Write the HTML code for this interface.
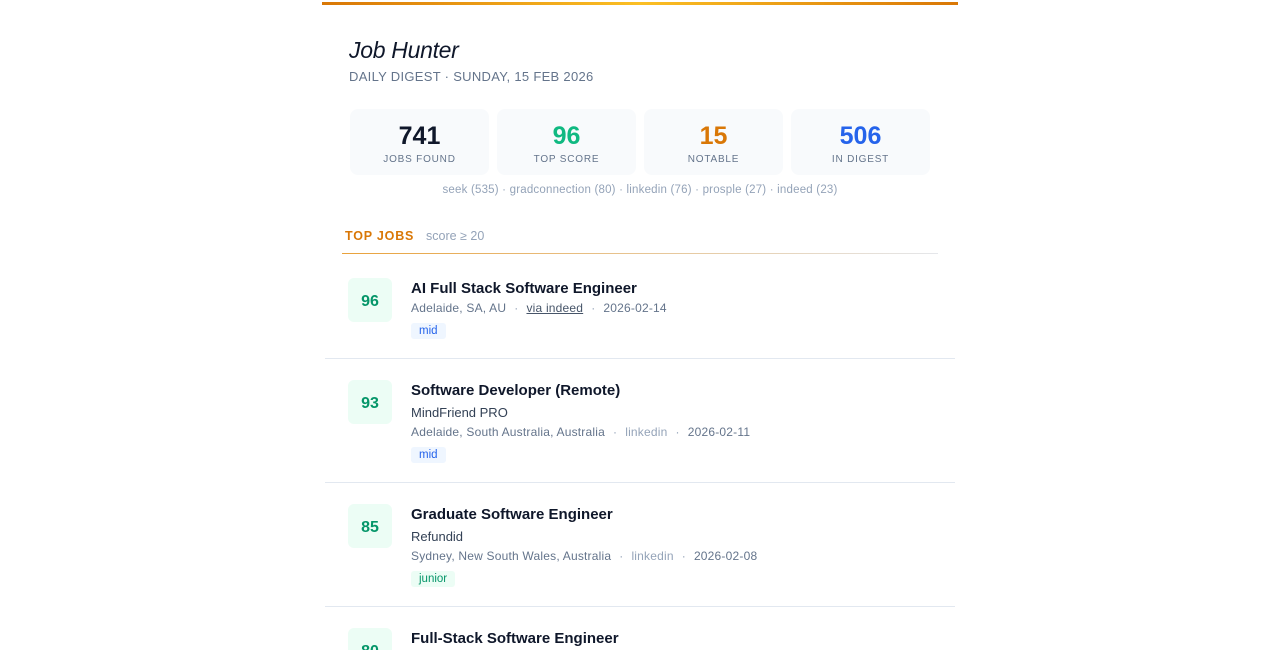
<!DOCTYPE html>
<html><head><meta charset="utf-8"><style>
*{box-sizing:border-box;margin:0;padding:0}
html,body{width:1280px;height:650px;overflow:hidden}
body{background:#fff;font-family:"Liberation Sans",sans-serif;color:#0f172a;position:relative}
.wrap{position:absolute;left:322px;top:0;width:636px}
.bar{position:absolute;left:0;top:2px;width:636px;height:3px;background:linear-gradient(90deg,#d97706,#fbbf24 50%,#d97706)}
.t{position:absolute;left:27px;top:37px;font-size:23px;font-style:italic;color:#0f172a;letter-spacing:-0.3px}
.sub{position:absolute;left:27px;top:69px;font-size:13px;color:#64748b;letter-spacing:0.3px}
.stat{position:absolute;top:109px;width:139px;height:66px;background:#f8fafc;border-radius:8px;text-align:center}
.stat b{display:block;font-size:25px;margin-top:13px;line-height:28px}
.stat span{display:block;font-size:10px;color:#64748b;letter-spacing:0.8px;margin-top:4px}
.src{position:absolute;left:0;width:636px;top:184px;text-align:center;font-size:11.5px;color:#94a3b8;letter-spacing:0.2px}
.sec{position:absolute;left:23px;top:229px;font-size:12.5px;font-weight:bold;color:#d97706;letter-spacing:0.8px}
.sec2{position:absolute;left:104px;top:229px;font-size:12.5px;color:#94a3b8}
.line{position:absolute;left:20px;top:253px;width:596px;height:1px;background:linear-gradient(90deg,#e9a23b,#e5e7eb)}
.job{position:absolute;left:3px;width:630px;border-bottom:1px solid #e2e8f0}
.sc{position:absolute;left:23px;width:44px;height:44px;background:#ecfdf5;border-radius:6px;color:#059669;font-weight:bold;font-size:16px;text-align:center;line-height:47px}
.jt{position:absolute;left:86px;font-size:15px;font-weight:bold;color:#0f172a}
.co{position:absolute;left:86px;font-size:13px;color:#334155}
.meta{position:absolute;left:86px;font-size:12px;color:#64748b;white-space:nowrap;letter-spacing:0.2px}
.meta i{font-style:normal;color:#94a3b8;margin:0 8px}
.tag{position:absolute;left:86px;font-size:11.5px;padding:2px 8px;border-radius:3px}
.mid{background:#eff6ff;color:#2563eb}
.jun{background:#ecfdf5;color:#059669}
</style></head><body><div class="wrap">
<div class="bar"></div>
<div class="t">Job Hunter</div>
<div class="sub">DAILY DIGEST · SUNDAY, 15 FEB 2026</div>
<div class="stat" style="left:28px"><b style="color:#0f172a">741</b><span>JOBS FOUND</span></div>
<div class="stat" style="left:175px"><b style="color:#10b981">96</b><span>TOP SCORE</span></div>
<div class="stat" style="left:322px"><b style="color:#d97706">15</b><span>NOTABLE</span></div>
<div class="stat" style="left:469px"><b style="color:#2563eb">506</b><span>IN DIGEST</span></div>
<div class="src">seek (535) · gradconnection (80) · linkedin (76) · prosple (27) · indeed (23)</div>
<div class="sec">TOP JOBS</div><div class="sec2">score ≥ 20</div>
<div class="line"></div>

<div class="job" style="top:254px;height:105px">
<div class="sc" style="top:24px">96</div>
<div class="jt" style="top:26px">AI Full Stack Software Engineer</div>
<div class="meta" style="top:47px">Adelaide, SA, AU<i>·</i><u style="color:#475569">via indeed</u><i>·</i>2026-02-14</div>
<div class="tag mid" style="top:69px">mid</div>
</div>
<div class="job" style="top:359px;height:124px">
<div class="sc" style="top:21px">93</div>
<div class="jt" style="top:23px">Software Developer (Remote)</div>
<div class="co" style="top:46px">MindFriend PRO</div>
<div class="meta" style="top:66px">Adelaide, South Australia, Australia<i>·</i><span style="color:#94a3b8">linkedin</span><i>·</i>2026-02-11</div>
<div class="tag mid" style="top:88px">mid</div>
</div>
<div class="job" style="top:483px;height:124px">
<div class="sc" style="top:21px">85</div>
<div class="jt" style="top:23px">Graduate Software Engineer</div>
<div class="co" style="top:46px">Refundid</div>
<div class="meta" style="top:66px">Sydney, New South Wales, Australia<i>·</i><span style="color:#94a3b8">linkedin</span><i>·</i>2026-02-08</div>
<div class="tag jun" style="top:88px">junior</div>
</div>
<div class="job" style="top:607px;height:43px;border:none">
<div class="sc" style="top:21px">80</div>
<div class="jt" style="top:23px">Full-Stack Software Engineer</div>
</div>
</div></body></html>
